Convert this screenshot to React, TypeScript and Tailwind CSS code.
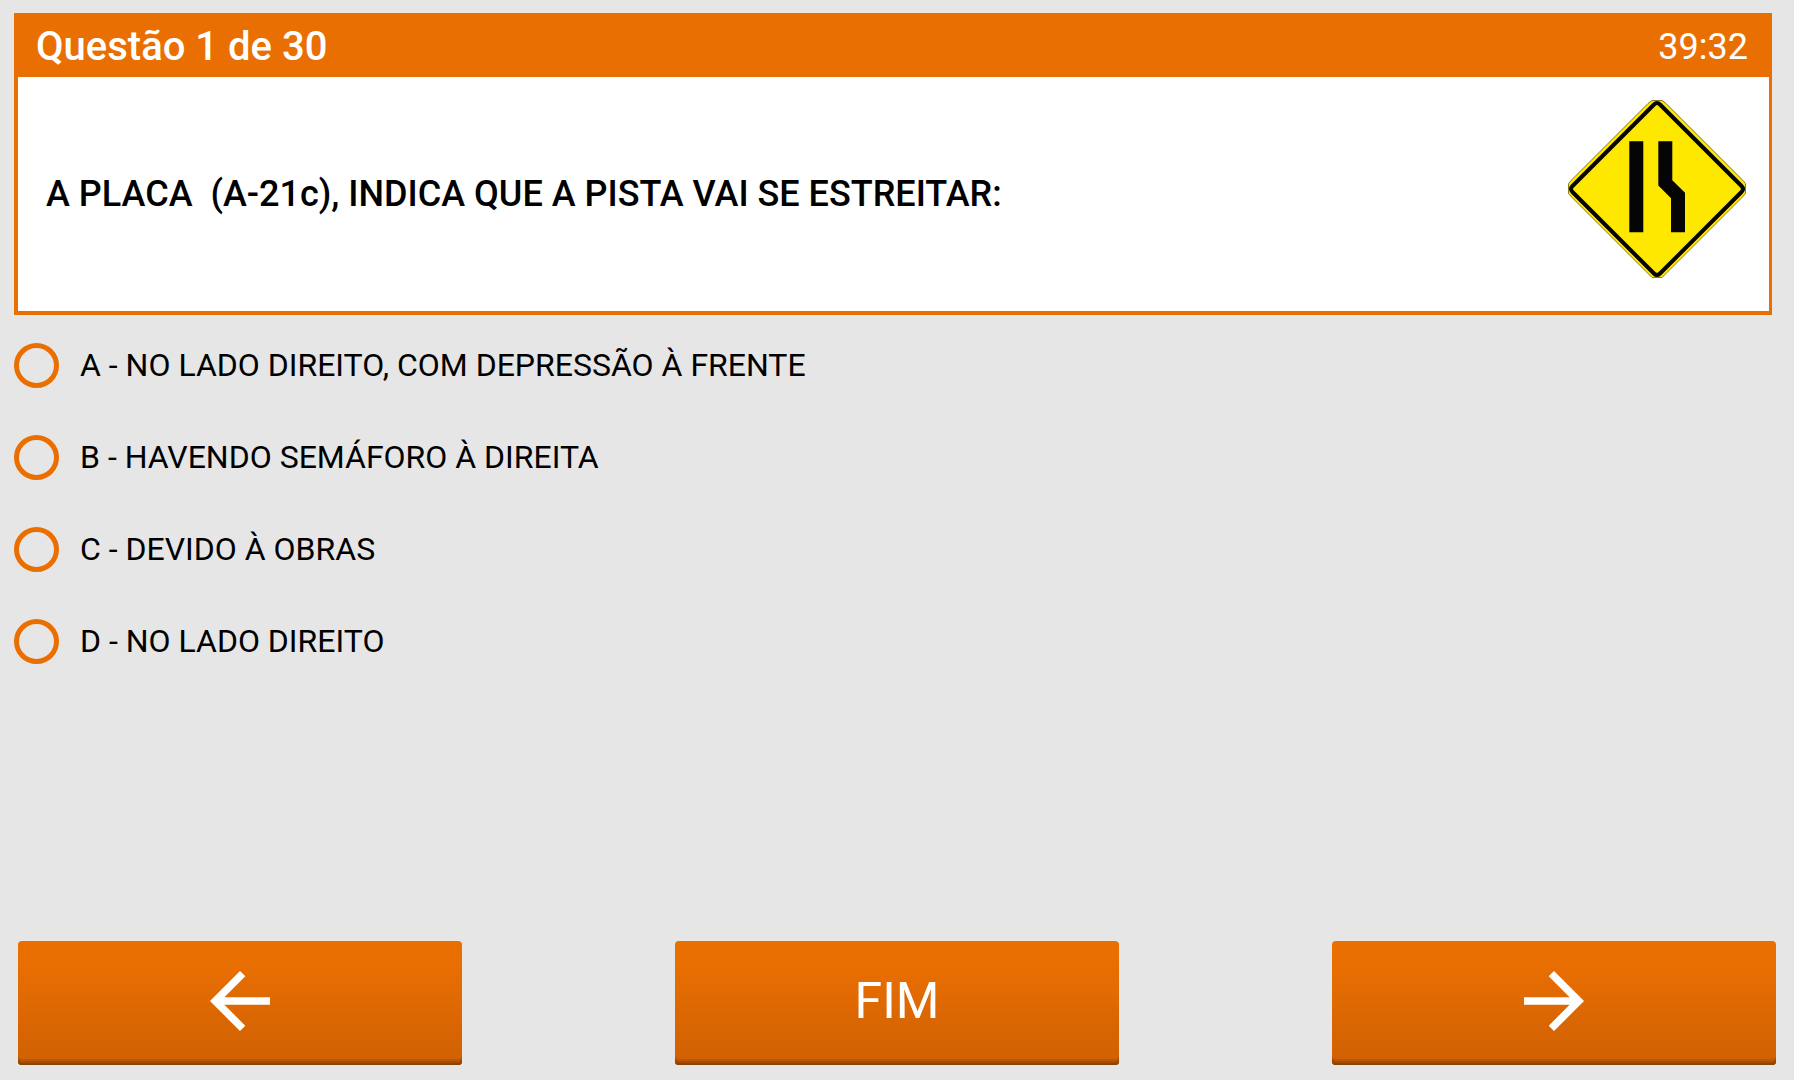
import { useState } from 'react';
import { MdArrowBack, MdArrowForward } from 'react-icons/md';

const options = [
  { id: 'A', text: 'NO LADO DIREITO, COM DEPRESSÃO À FRENTE' },
  { id: 'B', text: 'HAVENDO SEMÁFORO À DIREITA' },
  { id: 'C', text: 'DEVIDO À OBRAS' },
  { id: 'D', text: 'NO LADO DIREITO' },
];

const buttonClass =
  'flex h-[124px] cursor-pointer items-center justify-center rounded-[4px] bg-linear-to-b from-[#ea6f02] from-15% to-[#cf6002] pb-1 text-[50px] leading-none text-white shadow-[inset_0_-2px_0_#8c4200,inset_0_-4px_0_#a34d00,inset_0_-6px_0_#bd5800]';

const NarrowRoadSign = () => (
  <svg
    className="mb-[10px] h-[178px] w-[178px] shrink-0"
    viewBox="0 0 178 178"
    role="img"
    aria-label="Placa A-21c"
  >
    <path
      d="M84 .5h10l4 3 76 76 3.500 4v10l-3.500 4-76 76-4 4H84l-4-4-76-76-3.500-4v-10l3.500-4 76-76z"
      fill="#ffe800"
      stroke="#8a7c20"
      strokeWidth="1"
    />
    <path
      d="M86 4.500Q89 1.500 92 4.500L173.500 86Q176.500 89 173.500 92L92 173.500Q89 176.500 86 173.500L4.500 92Q1.500 89 4.500 86Z"
      fill="#ffe800"
      stroke="#050505"
      strokeWidth="4"
    />
    <path d="M61.300 41.300h14v91h-14zM90.300 41.300h14v39l12.700 12.500v39.500h-14v-34L90.300 85.500z" fill="#050505" />
  </svg>
);

const App = () => {
  const [answer, setAnswer] = useState('');
  return (
    <main className="flex min-h-screen flex-col bg-[#e6e6e6] pt-[13px] pb-[15px] font-['Roboto',sans-serif] text-black">
      <section className="mr-[22px] ml-[14px] border-r-[3px] border-b-4 border-l-4 border-[#ea6f02] bg-white">
        <header className="flex h-16 items-center justify-between bg-[#ea6f02] pt-1 pr-[21px] pl-[18px] text-white">
          <h1 className="text-[40px] leading-none font-medium">Questão 1 de 30</h1>
          <time className="text-[36px] leading-none">39:32</time>
        </header>
        <div className="flex min-h-[234px] items-center justify-between pr-[23px] pl-7">
          <p className="text-[36px] leading-none font-medium whitespace-pre-wrap">
            {'A PLACA  (A-21c), INDICA QUE A PISTA VAI SE ESTREITAR:'}
          </p>
          <NarrowRoadSign />
        </div>
      </section>
      <div role="radiogroup" aria-label="Alternativas" className="mt-1 flex flex-col px-[14px]">
        {options.map(option => (
          <label key={option.id} className="flex h-[92px] cursor-pointer items-center gap-[21px]">
            <input
              type="radio"
              name="answer"
              value={option.id}
              checked={answer === option.id}
              onChange={() => setAnswer(option.id)}
              className="h-[45px] w-[45px] shrink-0 appearance-none rounded-full border-5 border-[#ea6f02] checked:bg-[#ea6f02] checked:bg-clip-content checked:p-2"
            />
            <span className="text-[32px] leading-none">
              {option.id} - {option.text}
            </span>
          </label>
        ))}
      </div>
      <nav className="mt-auto grid grid-cols-3 gap-[213px] px-[18px]">
        <button type="button" aria-label="Questão anterior" className={buttonClass}>
          <MdArrowBack size={90} />
        </button>
        <button type="button" className={buttonClass}>
          FIM
        </button>
        <button type="button" aria-label="Próxima questão" className={buttonClass}>
          <MdArrowForward size={90} />
        </button>
      </nav>
    </main>
  );
};

export default App;
